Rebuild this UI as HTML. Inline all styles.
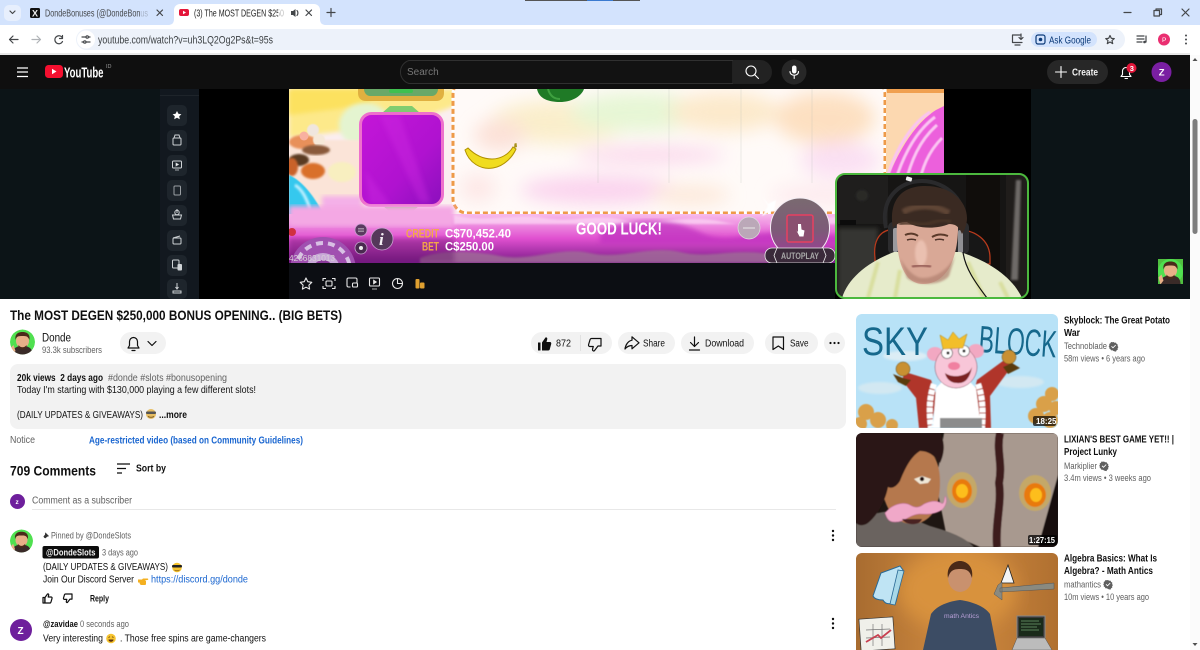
<!DOCTYPE html>
<html><head><meta charset="utf-8"><title>The MOST DEGEN $250,000 BONUS OPENING.. (BIG BETS)</title>
<style>
html,body{margin:0;padding:0;width:1200px;height:650px;overflow:hidden;background:#fff}
svg{display:block;position:absolute;left:0;top:0}
text{font-family:"Liberation Sans",sans-serif;white-space:pre}
.m{fill:#0f0f0f}.g{fill:#606060}.b{font-weight:bold}
.ic{fill:none;stroke:#0f0f0f;stroke-width:1.2;stroke-linejoin:round;stroke-linecap:round}
.ch{fill:none;stroke:#44474a;stroke-width:1.2;stroke-linecap:round;stroke-linejoin:round}
.w{fill:none;stroke:#fff;stroke-width:1.1;stroke-linecap:round;stroke-linejoin:round}
.sb{fill:#1e252c}
.si{fill:none;stroke:#cfd3d6;stroke-width:1}
.bi{fill:none;stroke:#e8e8e8;stroke-width:1.1;stroke-linejoin:round}
</style></head><body>
<svg width="1200" height="650" viewBox="0 0 1200 650" xmlns="http://www.w3.org/2000/svg">
<defs>
<filter id="b1"><feGaussianBlur stdDeviation="1"/></filter>
<filter id="b2"><feGaussianBlur stdDeviation="2.5"/></filter>
<filter id="b8"><feGaussianBlur stdDeviation="9"/></filter>
<filter id="b05"><feGaussianBlur stdDeviation="0.5"/></filter>
<linearGradient id="cl" x1="0" y1="0" x2="0" y2="1"><stop offset="0" stop-color="#f8bcec"/><stop offset=".5" stop-color="#e050d0"/><stop offset="1" stop-color="#7a1a88"/></linearGradient>
<linearGradient id="pur" x1="0" y1="0" x2="1" y2="1"><stop offset="0" stop-color="#c416d8"/><stop offset=".6" stop-color="#b012d0"/><stop offset="1" stop-color="#8a10bc"/></linearGradient>
<linearGradient id="lb" x1="0" y1="0" x2="1" y2="0"><stop offset="0" stop-color="#a86c30"/><stop offset=".5" stop-color="#d08a40"/><stop offset="1" stop-color="#b07030"/></linearGradient>
<linearGradient id="sp" x1="0" y1="0" x2="0" y2="1"><stop offset="0" stop-color="#7a6a70"/><stop offset=".55" stop-color="#7d5a78"/><stop offset="1" stop-color="#a03a98"/></linearGradient>
<clipPath id="gc"><rect x="289" y="89" width="655" height="174"/></clipPath>
<clipPath id="wc"><rect x="836" y="174" width="192" height="124" rx="9"/></clipPath>
<clipPath id="t1"><rect x="856" y="314" width="202" height="114" rx="6"/></clipPath>
<clipPath id="t2"><rect x="856" y="433" width="202" height="114" rx="6"/></clipPath>
<clipPath id="t3"><path d="M856 650V559a6 6 0 0 1 6-6h190a6 6 0 0 1 6 6v91z"/></clipPath>
<clipPath id="a1"><circle cx="22.500" cy="342" r="12.500"/></clipPath>
<clipPath id="a2"><circle cx="21.500" cy="541" r="11.500"/></clipPath>
<clipPath id="a3"><rect x="1158" y="259" width="25" height="25"/></clipPath>
<g id="dude"><circle cx="0" cy="0" r="12.500" fill="#50e050"/><path d="M-10 13c0-7 4-9 10-9s10 2 10 9z" fill="#3a2a28"/><ellipse cx="0" cy="-1" rx="6.500" ry="7" fill="#e8b088"/><path d="M-7-2c-1-7 4-8 7-8s8 1 7 8c-2-4-3-4-7-4s-6 0-7 4z" fill="#4a2a1a"/><path d="M-4 3c2 3 6 3 8 0l0 3c-2 2-6 2-8 0z" fill="#4a2a1a"/><path d="M-12 6l3-3 2 6-3 4z" fill="#e8b088"/></g>
<path id="vf" d="M0-4.500l1.100.8 1.400-.2.6 1.300 1.200.7-.2 1.400.8 1.100-.8 1.100.2 1.400-1.200.7-.6 1.300-1.400-.2L0 4.500l-1.100-.8-1.400.2-.6-1.300-1.200-.7.2-1.400L-4.900 0l.8-1.100-.2-1.400 1.200-.7.6-1.300 1.400.2z" fill="#606060"/>
<path id="chk" d="M-2-.2l1.500 1.500L2.200-1.400" fill="none" stroke="#fff" stroke-width=".9"/>
</defs>

<!-- Browser chrome -->
<rect width="1200" height="25" fill="#d3e3fd"/>
<rect x="525" y="0" width="115" height="1" fill="#555"/>
<rect x="587" y="0" width="26" height="1" fill="#3a7ad0"/>
<rect x="4" y="5" width="17" height="16" rx="5" fill="#e7effd"/>
<path d="M10 11l2.500 2.500L15 11" class="ch"/>
<rect x="30" y="8" width="10" height="10" rx="1.500" fill="#111"/>
<text x="32" y="16.500" font-size="9" fill="#eee" font-weight="bold">X</text>
<text x="45" y="16.500" font-size="9.800" fill="#44474a" textLength="103" lengthAdjust="spacingAndGlyphs">DondeBonuses (@DondeBonus</text>
<rect x="140" y="5" width="10" height="16" fill="#d3e3fd" opacity=".7"/>
<path d="M157 10l5.500 5.500M162.500 10L157 15.500" class="ch"/>
<path d="M168 25c3 0 6-1 6-6V10a6 6 0 0 1 6-6h134a6 6 0 0 1 6 6v9c0 5 3 6 6 6z" fill="#fff"/>
<rect x="179" y="9" width="10" height="7" rx="2" fill="#e4163a"/><path d="M183 10.700v3.600l3-1.800z" fill="#fff"/>
<text x="194" y="16.500" font-size="9.800" fill="#1f1f1f" textLength="90" lengthAdjust="spacingAndGlyphs">(3) The MOST DEGEN $250</text>
<rect x="278" y="6" width="8" height="15" fill="#fff" opacity=".7"/>
<path d="M291 11h2l2.500-2v8l-2.500-2h-2z" fill="#44474a"/><path d="M297 10.500c1.200 1.200 1.200 3.800 0 5" class="ch" stroke-width=".9"/>
<path d="M306 10l5.500 5.500M311.500 10L306 15.500" class="ch"/>
<path d="M331 8.500v8M327 12.500h8" class="ch"/>
<path d="M1124 12.500h7" class="ch"/>
<path d="M1154 10.500h5.500v5.500h-5.500zM1156 10.500V9h5.500v5.500H1159.500" class="ch"/>
<path d="M1182 9l7 7M1189 9l-7 7" class="ch"/>

<rect y="25" width="1200" height="28" fill="#fff"/>
<rect x="76" y="29" width="1049" height="21" rx="10.500" fill="#edf2fa"/>
<path d="M18 39.500H9.500M9.500 39.500l3.500-3.500M9.500 39.500l3.500 3.500" class="ch"/>
<path d="M32 39.500h8.500M40.500 39.500L37 36M40.500 39.500L37 43" class="ch" style="stroke:#b0b3b7"/>
<path d="M62.500 38a4 4 0 1 0 0 3.500M62.500 35.500v3h-3" class="ch"/>
<circle cx="86" cy="39.500" r="9" fill="#fff"/>
<path d="M82 37h4M88.500 37h1.500M82 42h1.500M86 42h4" class="ch"/><circle cx="87.200" cy="37" r="1.200" class="ch"/><circle cx="84.800" cy="42" r="1.200" class="ch"/>
<text x="98" y="43.500" font-size="10.600" fill="#3c4043" textLength="175" lengthAdjust="spacingAndGlyphs">youtube.com/watch?v=uh3LQ2Og2Ps&amp;t=95s</text>
<path d="M1021 35h-8.500v7.500h9.500" class="ch"/><path d="M1015 45h5M1021 34v5M1019 37.500l2 2 2-2" class="ch"/>
<rect x="1031" y="32" width="66" height="15" rx="7.500" fill="#d3e3fd"/>
<rect x="1036" y="35" width="9" height="9" rx="2" fill="none" stroke="#0b3a78" stroke-width="1.200"/><circle cx="1040.500" cy="39.500" r="1.800" fill="#0b3a78"/>
<text x="1049" y="43.500" font-size="10" fill="#0b3a78" textLength="42" lengthAdjust="spacingAndGlyphs">Ask Google</text>
<path d="M1110 35.500l1.300 2.800 3 .3-2.300 2 .7 3-2.700-1.600-2.700 1.600.7-3-2.300-2 3-.3z" class="ch"/>
<path d="M1137 36h7M1137 39h7M1137 42h5" class="ch" stroke-width="1.400"/><path d="M1146 36v6" class="ch"/><circle cx="1144.500" cy="42" r="1.300" fill="#44474a"/>
<circle cx="1164" cy="39.500" r="6" fill="#ea2f71"/><text x="1162" y="42" font-size="6.500" fill="#fff">P</text>
<circle cx="1186" cy="35.500" r="1" fill="#44474a"/><circle cx="1186" cy="39.500" r="1" fill="#44474a"/><circle cx="1186" cy="43.500" r="1" fill="#44474a"/>
<rect y="53" width="1190" height="2" fill="#e8e8e8"/>

<!-- YouTube header -->
<rect y="55" width="1190" height="34" fill="#0f0f0f"/>
<path d="M17 68h11M17 72h11M17 76.500h11" fill="none" stroke="#fff" stroke-width="1.200"/>
<rect x="45" y="65" width="18" height="13" rx="3.500" fill="#f40f2f"/><path d="M52 68.800v5.400l4.500-2.700z" fill="#fff"/>
<text x="64" y="77.500" font-size="15" fill="#fff" font-weight="bold" textLength="39.500" lengthAdjust="spacingAndGlyphs">YouTube</text>
<text x="106" y="68" font-size="5.500" fill="#999">ID</text>
<path d="M733 60.500H409a12 12 0 0 0 0 23h324z" fill="#121212" stroke="#303030"/>
<text x="407" y="75" font-size="10" fill="#777">Search</text>
<path d="M733 60h27a12 12 0 0 1 0 24h-27z" fill="#222"/>
<circle cx="751" cy="71" r="5" class="w"/><path d="M755 75l3.500 3.500" class="w"/>
<circle cx="794" cy="72" r="12.500" fill="#272727"/>
<rect x="792" y="65.500" width="4.500" height="8" rx="2.200" fill="#fff"/><path d="M790 71.500c0 5 8.500 5 8.500 0M794.200 75.500v3" class="w"/>
<rect x="1047" y="60" width="61" height="24" rx="12" fill="#272727"/>
<path d="M1061 66.500v11M1055.500 72h11" class="w" stroke-width="1.200"/>
<text x="1072" y="75.500" font-size="10" fill="#f1f1f1" font-weight="bold" textLength="26" lengthAdjust="spacingAndGlyphs">Create</text>
<path d="M1121 76.500h10l-1.500-2v-3.500a3.500 3.500 0 0 0-7 0v3.500zM1125 78.500h2.500" class="w"/>
<circle cx="1131.500" cy="68" r="5" fill="#e4163a"/><text x="1129.700" y="70.800" font-size="7.500" fill="#fff" font-weight="bold">3</text>
<circle cx="1161.500" cy="72" r="10" fill="#7a1fa2"/><text x="1158.700" y="75.500" font-size="9.500" fill="#fff" font-weight="bold">Z</text>

<!-- Video -->
<rect y="89" width="1190" height="210" fill="#0c1417"/>
<rect x="160" y="89" width="39" height="210" fill="#12181f"/>
<rect x="160" y="95" width="39" height=".7" fill="#232a30"/>
<rect x="199" y="89" width="835" height="210" fill="#000"/>
<rect x="1031" y="89" width="159" height="210" fill="#0c1417"/>
<g>
<rect class="sb" x="167" y="105" width="20" height="21" rx="5"/><path d="M177 111l1.400 2.800 3 .4-2.200 2.100.6 3-2.800-1.500-2.800 1.500.6-3-2.200-2.100 3-.4z" fill="#fff"/>
<rect class="sb" x="167" y="130" width="20" height="21" rx="5"/><rect x="173" y="138" width="8" height="7" rx="1" class="si"/><path d="M174 138l1-3h4l1 3" class="si"/>
<rect class="sb" x="167" y="155" width="20" height="21" rx="5"/><rect x="172.500" y="161" width="9" height="7" rx="1" class="si"/><path d="M176 163v3l2.500-1.500zM175 170h4" fill="#fff" stroke="#cfd3d6" stroke-width=".7"/>
<rect class="sb" x="167" y="180" width="20" height="21" rx="5"/><rect x="174" y="186" width="6.500" height="9" rx="1" class="si" opacity=".7"/>
<rect class="sb" x="167" y="205" width="20" height="21" rx="5"/><path d="M172.500 215h9l-1 4h-7zM177 209v4" class="si"/><circle cx="177" cy="212.500" r="2.200" class="si"/>
<rect class="sb" x="167" y="230" width="20" height="21" rx="5"/><rect x="173" y="238" width="8" height="6" rx="1" class="si"/><path d="M173 238l7-2" class="si"/>
<rect class="sb" x="167" y="255" width="20" height="21" rx="5"/><rect x="172.500" y="260" width="6.500" height="8" rx="1" class="si"/><rect x="177.500" y="264" width="4.500" height="6.500" rx="1" fill="#cfd3d6"/>
<rect class="sb" x="167" y="279" width="20" height="20" rx="5"/><path d="M173 291h8v2h-8zM177 283v6M175.500 287l1.500 2 1.500-2" class="si"/>
</g>

<!-- game -->
<rect x="289" y="263" width="546" height="36" fill="#0c0e13"/>
<g clip-path="url(#gc)">
<rect x="289" y="89" width="655" height="174" fill="#fbeef0"/>
<path d="M289 89h170v15c-40 18-100 25-170 34z" fill="#fde98a" filter="url(#b2)"/>
<path d="M289 89h90l-10 14c-25 6-50 8-80 12z" fill="#fce15f" filter="url(#b2)"/>
<ellipse cx="365" cy="125" rx="26" ry="22" fill="#e4f4d0" filter="url(#b2)"/>
<rect x="289" y="140" width="75" height="70" fill="#fbe4d8" filter="url(#b1)"/>
<ellipse cx="303" cy="142" rx="14" ry="7" fill="#e8905a" filter="url(#b1)"/>
<circle cx="313" cy="130" r="6" fill="#f0e6de" filter="url(#b05)"/><circle cx="319" cy="140" r="6" fill="#f6e8d8" filter="url(#b05)"/>
<circle cx="304" cy="136" r="4.500" fill="#f8b0a0"/>
<ellipse cx="316" cy="150" rx="14" ry="5" fill="#8a5a3a" filter="url(#b1)"/>
<ellipse cx="299" cy="160" rx="10" ry="6" fill="#5a3b20" filter="url(#b1)"/>
<ellipse cx="313" cy="171" rx="12" ry="8" fill="#d9702c" filter="url(#b1)"/>
<ellipse cx="292" cy="167" rx="6" ry="9" fill="#c9622a" filter="url(#b1)"/>
<ellipse cx="342" cy="172" rx="14" ry="10" fill="#f8efc0" filter="url(#b1)"/>
<path d="M289 175c14 6 25 22 33 36-8 4-22 4-33 9z" fill="#35c8ee" filter="url(#b05)"/>
<path d="M295 185c8 5 12 15 15 24" stroke="#c0f0ff" stroke-width="3" fill="none" filter="url(#b1)"/>
<path d="M322 196h40v16h-40z" fill="#f4b0e8" filter="url(#b2)"/>
<!-- reel panel -->
<rect x="453" y="80" width="432" height="133" rx="14" fill="#fffaf8"/>
<g filter="url(#b8)" opacity=".62">
<ellipse cx="560" cy="122" rx="70" ry="22" fill="#f8e7b0"/><ellipse cx="640" cy="112" rx="70" ry="20" fill="#d8f4c0"/>
<ellipse cx="725" cy="112" rx="55" ry="20" fill="#fbe0b0"/><ellipse cx="825" cy="118" rx="50" ry="26" fill="#fcd0a0"/>
<ellipse cx="500" cy="135" rx="26" ry="16" fill="#fad2c4"/><ellipse cx="650" cy="155" rx="75" ry="8" fill="#f8c0e4"/>
<ellipse cx="600" cy="190" rx="80" ry="14" fill="#f8bce8"/><ellipse cx="690" cy="195" rx="40" ry="10" fill="#fbdfc8"/>
<ellipse cx="840" cy="160" rx="40" ry="18" fill="#f8d0f0"/><ellipse cx="820" cy="195" rx="50" ry="10" fill="#fce0e8"/>
<ellipse cx="478" cy="188" rx="18" ry="14" fill="#fcdcdc"/>
</g>
<path d="M598 89v94M669 89v94M741 89v94M812 89v94" stroke="#b0b8b0" stroke-width=".5" opacity=".5"/>
<rect x="453" y="80" width="432" height="133" rx="14" fill="none" stroke="#fff" stroke-width="3"/>
<rect x="453" y="80" width="432" height="133" rx="14" fill="none" stroke="#ee9a48" stroke-width="3" stroke-dasharray="5 3"/>
<!-- right cream -->
<rect x="886" y="89" width="58" height="100" fill="#fcd8b0"/>
<path d="M887 89h57v4h-57z" fill="#f0a050"/>
<path d="M886 182c12-30 28-58 50-72l8-4v83h-58z" fill="#ec60dc"/>
<path d="M888 175c8-26 24-52 42-63M895 182c8-26 20-50 40-65M905 185c6-24 14-44 32-60M918 188c4-20 10-36 24-50" stroke="#fbc4f2" stroke-width="3" fill="none" filter="url(#b05)"/>
<!-- symbols top -->
<path d="M358 89h86v4c0 5-3 8-8 8h-70c-5 0-8-3-8-8z" fill="#e0b040"/><path d="M364 89h74c0 4-3 7-6 7h-62c-3 0-6-3-6-7z" fill="#69a868"/><rect x="389" y="89" width="24" height="4" rx="2" fill="#3fc050"/>
<path d="M382 113l8-7h22l8 7zM382 205l8 7h22l8-7z" fill="#80cc70"/>
<rect x="360.500" y="113.500" width="82" height="92" rx="11" fill="url(#pur)" stroke="#ee70cc" stroke-width="3" />
<path d="M380 116l40 86h10l-30-86zM365 170l25 34h-20z" fill="#d530e6" opacity=".3" filter="url(#b2)"/>
<path d="M537 89c2 10 12 13 23 13s21-5 24-13z" fill="#1f7a26"/><path d="M548 89c2 7 6 10 12 10" stroke="#3fa040" stroke-width="2" fill="none"/>
<path d="M465 150c4 13 16 20 28 18 12-2 20-12 23-19l-3-2c-4 7-12 12-21 12-10 0-18-5-24-11z" fill="#f0dc20" stroke="#b09000" stroke-width="1"/><path d="M514 148l3-1-.5-4-2 .5z" fill="#a8901c"/>
<!-- clouds -->
<rect x="289" y="214" width="655" height="49" fill="url(#cl)"/>
<rect x="289" y="206" width="165" height="20" fill="#f4a8e4" filter="url(#b2)"/>
<path d="M454 215c30 8 60-2 90 3s50-5 80 2 60-7 100 2 100-10 160-6v8H454z" fill="#fcd6f4" opacity=".75" filter="url(#b1)"/>
<path d="M600 232c30-15 70-15 100 0s60-5 90 2 90-10 154 0v10H600z" fill="#c030c0" opacity=".75" filter="url(#b2)"/>
<path d="M420 258c20-8 50-8 80-2s60-10 90-3 60-8 90-1 50-4 90 2v9H420z" fill="#a06a98" opacity=".85" filter="url(#b1)"/>
<rect x="289" y="238" width="165" height="25" fill="#5a1060" opacity=".35" filter="url(#b2)"/>
<circle cx="323" cy="270" r="33" fill="#a050b0"/><circle cx="323" cy="270" r="27" fill="none" stroke="#d8c0e4" stroke-width="4" stroke-dasharray="7 5"/><circle cx="323" cy="270" r="17" fill="#c8a8d8"/><circle cx="323" cy="270" r="10" fill="#8a3a9a"/>
<circle cx="292" cy="232" r="4" fill="#d03040"/>
<circle cx="361" cy="230" r="6" fill="#5a3a60" stroke="#c8a0d0" stroke-width=".8"/><path d="M358 228.500h6M358 230h6M358 231.500h6" stroke="#ddd" stroke-width=".5"/>
<circle cx="361" cy="248" r="6" fill="#4a2a50" stroke="#c8a0d0" stroke-width=".8"/><circle cx="361" cy="248" r="2" fill="#eee"/>
<circle cx="382" cy="239" r="11" fill="#54385a" stroke="#c8a0d0" stroke-width=".8"/>
<text x="379" y="245" font-size="17" fill="#f4f0f4" font-weight="bold" font-style="italic" style="font-family:'Liberation Serif',serif">i</text>
<text x="406" y="237.500" font-size="11.500" fill="#f4a848" font-weight="bold" textLength="33" lengthAdjust="spacingAndGlyphs">CREDIT</text>
<text x="445" y="237.500" font-size="11.500" fill="#fff" font-weight="bold" textLength="66" lengthAdjust="spacingAndGlyphs">C$70,452.40</text>
<text x="422" y="250.500" font-size="11.500" fill="#f4a848" font-weight="bold" textLength="17" lengthAdjust="spacingAndGlyphs">BET</text>
<text x="445" y="250.500" font-size="11.500" fill="#fff" font-weight="bold" textLength="49" lengthAdjust="spacingAndGlyphs">C$250.00</text>
<text x="576" y="234.500" font-size="17.500" fill="#fff" font-weight="bold" textLength="86" lengthAdjust="spacingAndGlyphs">GOOD LUCK!</text>
<text x="289" y="261" font-size="7.800" fill="#d8d0d8" textLength="46" lengthAdjust="spacingAndGlyphs">4266831013</text>
<path d="M762 196l6 8 8-4-2 10-12 6 6-10z" fill="#fff" filter="url(#b05)"/>
<circle cx="749" cy="228" r="11" fill="#bba8b8" stroke="#ddd" stroke-width=".7"/><path d="M743 228h12" stroke="#e8e8e8"/>
<ellipse cx="800" cy="228" rx="29.500" ry="30" fill="url(#sp)" stroke="#f4eef4"/>
<rect x="787" y="215" width="26" height="27" rx="2" fill="#8a5070" stroke="#e84060" stroke-width="1.500"/>
<path d="M798 224l0 8 -1.500-1.500 3 6h4l1-6-3-1-.5-5.500z" fill="#fff"/>
<rect x="765" y="248" width="70" height="15" rx="7" fill="#3a2a3a" stroke="#eee" stroke-width=".8"/>
<path d="M777 248l-3 7.500 3 7.500M823 248l3 7.500-3 7.500" stroke="#eee" fill="none" stroke-width=".8"/>
<text x="781" y="259" font-size="9" fill="#a8a8a8" font-weight="bold" textLength="38" lengthAdjust="spacingAndGlyphs">AUTOPLAY</text>
</g>
<!-- control icons -->
<path d="M306 278l1.800 3.700 4 .6-2.900 2.800.7 4-3.600-1.900-3.600 1.900.7-4-2.900-2.800 4-.6z" class="bi"/>
<path d="M323 281v-2.500h3M332 278.500h3v2.500M335 286v2.500h-3M326 288.500h-3V286" class="bi"/><rect x="326" y="281" width="6" height="5" rx="1" class="bi"/>
<path d="M357 283v-3.500a1.500 1.500 0 0 0-1.500-1.500h-7a1.500 1.500 0 0 0-1.500 1.500v6a1.500 1.500 0 0 0 1.500 1.500h2" class="bi"/><rect x="352.500" y="283" width="5" height="4" rx="1" class="bi"/>
<rect x="369.500" y="278" width="10" height="8" rx="1" class="bi"/><path d="M373.500 280v4l3-2zM372 289h5" fill="#e8e8e8" stroke="#e8e8e8" stroke-width=".7"/>
<circle cx="397.500" cy="283.500" r="5" class="bi"/><path d="M397.500 278.500v5h5" class="bi"/>
<rect x="415.500" y="279" width="4" height="9.500" rx="1" fill="#e0a030"/><rect x="420" y="282.500" width="4.500" height="6" rx="1" fill="#e0a030"/>
<!-- webcam -->
<g clip-path="url(#wc)">
<rect x="836" y="174" width="192" height="124" fill="#161514"/>
<rect x="838" y="176" width="50" height="48" fill="#1f1e1d"/>
<rect x="838" y="228" width="40" height="70" fill="#353433" filter="url(#b2)"/>
<rect x="966" y="174" width="34" height="100" fill="#100d0b"/>
<rect x="1006" y="174" width="22" height="124" fill="#201d1b"/>
<path d="M1016 180l-5 100 7 0 3-100z" fill="#6e6a68" filter="url(#b1)"/>
<rect x="840" y="220" width="16" height="5" fill="#0c0c0c"/><rect x="856" y="190" width="12" height="11" rx="5" fill="#2a2928" filter="url(#b1)"/>
<path d="M875 258c-2-16 4-26 14-28h70c16 0 31 10 31 28v6h-115z" fill="#171717" stroke="#b83a1c" stroke-width="1.300"/>
<path d="M886 228c-6-28 12-47 36-47s46 20 42 46" fill="none" stroke="#2a2a2c" stroke-width="4"/>
<rect x="888" y="222" width="11" height="32" rx="5" fill="#2c2c2e"/><rect x="956" y="222" width="13" height="32" rx="5" fill="#2c2c2e"/>
<rect x="893" y="228" width="5" height="24" rx="2" fill="#9a9a9e"/><rect x="958" y="230" width="5" height="24" rx="2" fill="#909094"/>
<path d="M842 298c6-20 26-36 52-46l66 0c26 8 52 24 62 46z" fill="#e6ebcb"/>
<path d="M878 262l-10 36M968 262l16 36M900 270l-5 28M1000 282l8 16" stroke="#d8de9e" stroke-width="4" fill="none" filter="url(#b1)"/>
<path d="M897 222c-2 36 6 62 26 62 24 0 36-26 35-62-2-14-60-14-61 0z" fill="#d9a896"/>
<path d="M900 258c8 14 16 20 23 20 10 0 24-6 32-22l-6 20c-8 10-32 10-42 2z" fill="#b08070" opacity=".7" filter="url(#b1)"/>
<ellipse cx="921" cy="253" rx="6" ry="13" fill="#eac0b0" filter="url(#b1)"/>
<path d="M905 235c4-2 9-2 13 1M932 237c5-3 11-3 16-1" stroke="#5a3a2a" stroke-width="2" fill="none"/>
<path d="M907 240c3-1 6-1 9 0M935 240c3-1 6-1 9 0" stroke="#50342a" stroke-width="1.600" fill="none"/>
<path d="M912 267c5-2 14-2 19 0" stroke="#a06860" stroke-width="3" fill="none" filter="url(#b05)"/>
<path d="M893 228c-4-22 4-41 30-42 26-1 44 14 44 32 0 6-2 12-5 16-3-8-7-10-13-10-14 6-34 4-42-2-7 0-11 2-14 6z" fill="#3a2a22"/>
<path d="M903 212c14-8 32-7 46 1" stroke="#5e4536" stroke-width="6" fill="none" filter="url(#b1)"/>
<path d="M899 224c10-3 20 2 28 0s16-6 24-2" stroke="#4a3428" stroke-width="3" fill="none" filter="url(#b1)"/>
<path d="M963 252c2 16 12 30 24 46" stroke="#111" stroke-width="1.200" fill="none"/>
<rect x="906" y="177" width="6" height="4" rx="1" fill="#f0f0f0" transform="rotate(15 909 179)"/>
</g>
<rect x="836" y="174" width="192" height="124" rx="9" fill="none" stroke="#4cb83e" stroke-width="2"/>
<g clip-path="url(#a3)"><rect x="1158" y="259" width="25" height="25" fill="#50c040"/><use href="#dude" transform="translate(1170.500 271.500)"/></g>

<!-- scrollbar -->
<rect x="1190" y="55" width="10" height="595" fill="#fbfbfb"/>
<path d="M1192.500 61l2.500-3 2.500 3z" fill="#505050"/><path d="M1192.500 643l2.500 3 2.500-3z" fill="#505050"/>
<rect x="1192.500" y="119" width="5" height="115" rx="2.500" fill="#7e7e7e"/>

<!-- title & channel -->
<text x="10" y="320" font-size="14" class="m b" textLength="332" lengthAdjust="spacingAndGlyphs">The MOST DEGEN $250,000 BONUS OPENING.. (BIG BETS)</text>
<g clip-path="url(#a1)"><use href="#dude" transform="translate(22.500 342)"/></g>
<text x="42" y="341.500" font-size="11.500" class="m" textLength="29" lengthAdjust="spacingAndGlyphs">Donde</text>
<text x="42" y="353" font-size="9" class="g" textLength="60" lengthAdjust="spacingAndGlyphs">93.3k subscribers</text>
<rect x="120" y="332" width="46" height="22" rx="11" fill="#f2f2f2"/>
<path d="M128 348h11l-1.500-2.500v-4a4 4 0 0 0-8 0v4zM132 350.500h3" class="ic"/>
<path d="M148 341.500l4 4 4-4" class="ic"/>

<!-- actions -->
<rect x="531" y="332" width="81" height="22" rx="11" fill="#f2f2f2"/>
<path d="M538 342.500h2.500v8H538zM542 350.500v-8l3.500-5c1-.5 2 .2 1.800 1.500l-.8 3h3.500c1 0 1.500 1 1.200 2l-1.500 5.500c-.2.600-.8 1-1.400 1z" fill="#0f0f0f"/>
<text x="556" y="346.500" font-size="10" fill="#0f0f0f" textLength="15" lengthAdjust="spacingAndGlyphs">872</text>
<rect x="580" y="335" width=".8" height="16" fill="#ddd"/>
<path d="M601 338.500h-9.500c-.6 0-1.100.3-1.400 1l-1.500 5c-.3 1 .2 2 1.200 2h3.500l-.8 2.700c-.2 1.200.9 2.200 1.900 1.500l3.600-4.700h3v-7.500z" class="ic"/>
<rect x="618" y="332" width="57" height="22" rx="11" fill="#f2f2f2"/>
<path d="M632 336.800l7 6-7 6v-3.300c-3 0-5 1-7 3.500.5-4 3-8 7-8.800z" class="ic"/>
<text x="643" y="346.500" font-size="10" fill="#0f0f0f" textLength="22" lengthAdjust="spacingAndGlyphs">Share</text>
<rect x="681" y="332" width="73" height="22" rx="11" fill="#f2f2f2"/>
<path d="M694.500 337v9.500M690.500 342.500l4 4 4-4M689.500 350h10" class="ic"/>
<text x="705" y="346.500" font-size="10" fill="#0f0f0f" textLength="39" lengthAdjust="spacingAndGlyphs">Download</text>
<rect x="765" y="332" width="53" height="22" rx="11" fill="#f2f2f2"/>
<path d="M773 337h10.500v12.500l-5.200-3.500-5.300 3.500z" class="ic"/>
<text x="790" y="346.500" font-size="10" fill="#0f0f0f" textLength="18.500" lengthAdjust="spacingAndGlyphs">Save</text>
<circle cx="834.500" cy="343" r="10.500" fill="#f2f2f2"/>
<circle cx="830.500" cy="343" r="1.100" fill="#0f0f0f"/><circle cx="834.500" cy="343" r="1.100" fill="#0f0f0f"/><circle cx="838.500" cy="343" r="1.100" fill="#0f0f0f"/>

<!-- description -->
<rect x="10" y="364" width="836" height="65" rx="8" fill="#f2f2f2"/>
<text x="17" y="381" font-size="10" fill="#0f0f0f" font-weight="bold" textLength="86" lengthAdjust="spacingAndGlyphs">20k views  2 days ago</text>
<text x="108" y="381" font-size="10" fill="#606060" textLength="119" lengthAdjust="spacingAndGlyphs">#donde #slots #bonusopening</text>
<text x="17" y="393" font-size="10" fill="#131313" textLength="239" lengthAdjust="spacingAndGlyphs">Today I'm starting with $130,000 playing a few different slots!</text>
<text x="17" y="418" font-size="10" fill="#131313" textLength="126" lengthAdjust="spacingAndGlyphs">(DAILY UPDATES &amp; GIVEAWAYS)</text>
<circle cx="151" cy="414" r="5" fill="#e6bd62"/><rect x="146" y="411.500" width="10" height="2.500" rx="1" fill="#555"/><path d="M148 416.500c1.500 1 4.500 1 6 0" stroke="#6a4a18" stroke-width=".8" fill="none"/>
<text x="159" y="418" font-size="10" fill="#0f0f0f" font-weight="bold" textLength="28" lengthAdjust="spacingAndGlyphs">...more</text>
<text x="10" y="443" font-size="10" fill="#606060" textLength="25" lengthAdjust="spacingAndGlyphs">Notice</text>
<text x="89" y="443.500" font-size="10" fill="#1a66d0" font-weight="bold" textLength="214" lengthAdjust="spacingAndGlyphs">Age-restricted video (based on Community Guidelines)</text>

<!-- comments -->
<text x="10" y="475.500" font-size="13.500" class="m b" textLength="86" lengthAdjust="spacingAndGlyphs">709 Comments</text>
<path d="M117 464h13M117 468.500h9M117 473h5" fill="none" stroke="#0f0f0f" stroke-width="1.200"/>
<text x="136" y="471.500" font-size="10" fill="#0f0f0f" font-weight="bold" textLength="30" lengthAdjust="spacingAndGlyphs">Sort by</text>
<circle cx="17.500" cy="501.500" r="7.500" fill="#6e1f9c"/><text x="15.500" y="504" font-size="6.500" fill="#fff" font-weight="bold">z</text>
<text x="32" y="503.500" font-size="10" fill="#606060" textLength="100" lengthAdjust="spacingAndGlyphs">Comment as a subscriber</text>
<rect x="32" y="509" width="804" height=".8" fill="#e2e2e2"/>

<g clip-path="url(#a2)"><use href="#dude" transform="translate(21.500 541) scale(.92)"/></g>
<path d="M44 538l2-2.500M45.500 533l3 3-1.500.5-1.700 1.500-1.500-1.500 1.500-1.700z" fill="#333" stroke="#333" stroke-width=".6"/>
<text x="51" y="538.500" font-size="9" fill="#606060" textLength="80" lengthAdjust="spacingAndGlyphs">Pinned by @DondeSlots</text>
<circle cx="833" cy="531" r="1.200" fill="#0f0f0f"/><circle cx="833" cy="535.500" r="1.200" fill="#0f0f0f"/><circle cx="833" cy="540" r="1.200" fill="#0f0f0f"/>
<rect x="42.500" y="546" width="56.500" height="12.500" rx="2" fill="#0c0c0c"/>
<text x="46" y="555.500" font-size="9.500" fill="#f1f1f1" font-weight="bold" textLength="49.500" lengthAdjust="spacingAndGlyphs">@DondeSlots</text>
<text x="102" y="555.500" font-size="9" fill="#606060" textLength="36" lengthAdjust="spacingAndGlyphs">3 days ago</text>
<text x="43" y="570" font-size="10" fill="#0f0f0f" textLength="125" lengthAdjust="spacingAndGlyphs">(DAILY UPDATES &amp; GIVEAWAYS)</text>
<circle cx="177" cy="567.500" r="4.800" fill="#f6c430"/><rect x="172" y="565" width="10" height="2.500" rx="1" fill="#222"/><path d="M174.500 570c1.500 1 3.500 1 5 0" stroke="#7a5010" stroke-width=".7" fill="none"/>
<text x="43" y="582.500" font-size="10" fill="#0f0f0f" textLength="91" lengthAdjust="spacingAndGlyphs">Join Our Discord Server</text>
<path d="M138 579.500h4l1-1h4.500c1 0 1 1.500 0 1.500l-2.500.2 1 .8v3c0 .5-.5 1-1 1h-3.500c-1 0-2-1-2-2.500h-1.500z" fill="#f4b020"/>
<text x="151" y="582.500" font-size="10" fill="#1a66d0" textLength="97" lengthAdjust="spacingAndGlyphs">https://discord.gg/donde</text>
<path d="M43 597.500h1.800v5.500H43zM45 603v-5.500l2.500-3.500c.7-.4 1.400.2 1.200 1l-.5 2h3c.7 0 1 .7.8 1.400l-1 3.600c-.2.500-.5 1-1 1z" class="ic" stroke-width=".9"/>
<path d="M72 594h-6.500c-.5 0-.8.3-1 .7L63.500 598c-.2.700.2 1.400.8 1.400h2.500l-.5 2c-.2.800.6 1.400 1.200 1l2.500-3.300h2z" class="ic" stroke-width=".9"/>
<text x="90" y="601.500" font-size="9" fill="#0f0f0f" font-weight="bold" textLength="19" lengthAdjust="spacingAndGlyphs">Reply</text>

<circle cx="21" cy="630" r="11" fill="#6e1f9c"/><text x="17.500" y="634" font-size="10" fill="#fff" font-weight="bold">Z</text>
<text x="43" y="627" font-size="9" fill="#0f0f0f" font-weight="bold" textLength="35" lengthAdjust="spacingAndGlyphs">@zavidae</text>
<text x="80" y="627" font-size="9" fill="#606060" textLength="49" lengthAdjust="spacingAndGlyphs">0 seconds ago</text>
<text x="43" y="641.500" font-size="10" fill="#0f0f0f" textLength="60" lengthAdjust="spacingAndGlyphs">Very interesting</text>
<circle cx="111" cy="638.500" r="4.800" fill="#f6c430"/><path d="M108.500 637.500l1.500-.8M113.500 637.500l-1.500-.8" stroke="#5a3a10" stroke-width=".8"/><path d="M108.500 639.500h5c0 3-5 3-5 0z" fill="#5a3010"/>
<text x="120" y="641.500" font-size="10" fill="#0f0f0f" textLength="146" lengthAdjust="spacingAndGlyphs">. Those free spins are game-changers</text>
<circle cx="833" cy="619" r="1.200" fill="#0f0f0f"/><circle cx="833" cy="623.500" r="1.200" fill="#0f0f0f"/><circle cx="833" cy="628" r="1.200" fill="#0f0f0f"/>

<!-- Thumb 1 -->
<g clip-path="url(#t1)">
<rect x="856" y="314" width="202" height="114" fill="#b8e2f7"/>
<ellipse cx="905" cy="356" rx="22" ry="5" fill="#dcedf5" filter="url(#b1)"/><ellipse cx="880" cy="388" rx="22" ry="6" fill="#d2e8f2" filter="url(#b1)"/><ellipse cx="1020" cy="382" rx="24" ry="6" fill="#d2e8f2" filter="url(#b1)"/>
<text x="862" y="355" font-size="40" fill="#16688c" textLength="66" lengthAdjust="spacingAndGlyphs">SKY</text>
<text x="978" y="352" font-size="38" fill="#16688c" textLength="78" lengthAdjust="spacingAndGlyphs" transform="rotate(4 978 352)">BLOCK</text>
<g filter="url(#b05)">
<path d="M905 372l26 8 6 16-6 32h-12l-3-30-14-18zM1007 358l-30 22-4 16 6 32h12l-1-32 22-30z" fill="#b0352c"/>
<path d="M933 428l3-40 6-6h28l6 6 5 40z" fill="#fff"/>
<path d="M934 384c-5 14-5 28-3 44M978 384c5 14 5 28 4 44" stroke="#fff" stroke-width="6" fill="none" stroke-dasharray="5 1"/>
<rect x="940" y="418" width="42" height="10" fill="#8c8c8c"/>
<ellipse cx="935" cy="354" rx="8" ry="7" fill="#f2a8c2"/><ellipse cx="976" cy="351" rx="8" ry="7" fill="#f2a8c2"/>
<ellipse cx="956" cy="367" rx="21" ry="21" fill="#f8c6d8" stroke="#7a3a50" stroke-width=".5"/>
<circle cx="947" cy="353" r="5.500" fill="#fff" stroke="#333" stroke-width=".6"/><circle cx="964" cy="351" r="5.500" fill="#fff" stroke="#333" stroke-width=".6"/>
<circle cx="948" cy="353" r="1.500" fill="#222"/><circle cx="964" cy="351" r="1.500" fill="#222"/>
<ellipse cx="954" cy="366" rx="6" ry="4" fill="#f080a0"/>
<path d="M945 373c8 6 24 3 27-6-2 10-6 17-15 16-7 0-11-5-12-10z" fill="#7a2020"/>
<path d="M943 349l-3-14 8 5 5-8 6 7 8-5-4 14z" fill="#f2be2a" stroke="#b08010" stroke-width=".5"/>
<circle cx="903" cy="369" r="7" fill="#c89030" stroke="#5a3a10" stroke-width=".5"/><circle cx="1009" cy="357" r="7" fill="#c89030" stroke="#5a3a10" stroke-width=".5"/>
<path d="M893 374l10 4 8 2-5 6-8-4zM1003 367l9-4 8 5-12 6z" fill="#5a3a10"/>
<g fill="#d9a04a"><circle cx="866" cy="412" r="8"/><circle cx="878" cy="420" r="8"/><circle cx="860" cy="424" r="7"/><circle cx="892" cy="425" r="6"/><circle cx="1052" cy="394" r="7"/><circle cx="1044" cy="404" r="8"/><circle cx="1056" cy="408" r="7"/><circle cx="1036" cy="416" r="8"/><circle cx="1050" cy="420" r="8"/></g>
</g>
<rect x="1033" y="416" width="23" height="10" rx="2" fill="#000" opacity=".7"/>
<text x="1036" y="424" font-size="8" fill="#fff" font-weight="bold">18:25</text>
</g>
<!-- Thumb 2 -->
<g clip-path="url(#t2)">
<rect x="856" y="433" width="202" height="114" fill="#1e1612"/>
<g filter="url(#b05)">
<path d="M944 433h114v60l-18 54h-60c-14-6-22-10-34-14l-10-50z" fill="#a8998f"/>
<path d="M1058 475l-20 72h20z" fill="#141010"/>
<path d="M1000 433c-4 18 3 30-1 50 3 20-4 40-2 64" stroke="#3e1a1c" stroke-width="8" fill="none"/>
<ellipse cx="962" cy="490" rx="15" ry="18" fill="#c4a868"/><ellipse cx="962" cy="491" rx="10" ry="12" fill="#e87a10"/><ellipse cx="962" cy="491" rx="6" ry="7" fill="#fdbe1a"/>
<ellipse cx="1035" cy="493" rx="16" ry="18" fill="#c4a868"/><ellipse cx="1035" cy="495" rx="11" ry="12" fill="#e87a10"/><ellipse cx="1036" cy="495" rx="6" ry="7" fill="#fdbe1a"/>
<path d="M856 522c14-8 28-12 40-10l34 14c14 4 34 10 44 21H856z" fill="#6a635e"/>
<path d="M882 470c4-14 22-24 40-22 12 2 18 16 18 34 0 18-4 34-18 40-14 6-28-2-34-14-6-12-8-26-6-38z" fill="#b5784e"/>
<path d="M856 433h84c6 10 4 22 0 30-6-8-12-12-20-12-10 6-16 20-20 30-4 6-8 8-12 6-2 12-10 28-20 36-6 4-10 2-12 0z" fill="#2a1812"/>
<path d="M914 479l8-3 9 3-3 4-8 1z" fill="#f0e8d8"/><circle cx="922" cy="479" r="2.200" fill="#201010"/>
<path d="M885 513c6-8 18-12 25-8 5 3 9 3 14-1 8-4 14-3 17-1s3-2 4-7c3 3 1 12-5 15-8 4-14 3-21 3-10 1-14 8-24 8-7 0-8-4-10-9z" fill="#f0a8c8" stroke="#c06a98" stroke-width=".5"/>
<path d="M902 519h20c-2 7-16 7-20 0z" fill="#4a2020"/>
</g>
<rect x="1028" y="535" width="29" height="10" rx="2" fill="#000" opacity=".75"/>
<text x="1029" y="543" font-size="8" fill="#fff" font-weight="bold" textLength="26" lengthAdjust="spacingAndGlyphs">1:27:15</text>
</g>
<!-- Thumb 3 -->
<g clip-path="url(#t3)">
<rect x="856" y="553" width="202" height="97" fill="url(#lb)"/>
<ellipse cx="957" cy="590" rx="60" ry="40" fill="#d8923e" filter="url(#b8)"/>
<path d="M881 573l19-7 3 4-7 32c-7 3-11 2-13-2-6 0-9-2-10-4z" fill="#bfe4f4" stroke="#2a6a96" stroke-width="1"/>
<path d="M898 570l6 1-9 34-5-1z" fill="#a8d8e8" stroke="#2a6a96" stroke-width=".8"/>
<path d="M1008 565l6 18h-13z" fill="#f4f4f4" stroke="#222" stroke-width=".8"/>
<path d="M998 585l4-3 0 18-8-6zM1000 588l54-5v6l-54 3z" fill="#8a8a80" stroke="#555" stroke-width=".5"/>
<ellipse cx="960" cy="578" rx="12" ry="14" fill="#c9916e"/>
<path d="M948 578c-2-12 6-17 12-17s14 5 12 17c-2-7-5-9-12-9s-10 2-12 9z" fill="#4a2a18"/>
<path d="M923 650l8-36c5-7 14-12 29-14 14 2 25 7 30 14l7 36z" fill="#3c4c64"/>
<text x="944" y="618" font-size="6.500" fill="#b8a0d8" textLength="35" lengthAdjust="spacingAndGlyphs">math Antics</text>
<rect x="860" y="618" width="34" height="32" fill="#f0f0ea" stroke="#333" stroke-width=".7" transform="rotate(-4 877 634)"/>
<path d="M866 630l24-1M866 638l24-1M873 624v22M882 624v22" stroke="#777" stroke-width=".7"/>
<path d="M866 642l12-7 3 3 10-8" stroke="#c84050" stroke-width="1.800" fill="none"/>
<rect x="1017" y="616" width="28" height="22" fill="#3a3a3a" stroke="#888" stroke-width="1"/><rect x="1019" y="618" width="24" height="18" fill="#1a2a1a"/>
<path d="M1021 621h18M1021 624h20M1021 627h16M1021 630h18" stroke="#70a070" stroke-width=".7"/>
<path d="M1012 650l5-12h28l7 12z" fill="#bcbcbc" stroke="#555" stroke-width=".5"/>
</g>

<!-- side text -->
<text x="1064" y="323.500" font-size="10" fill="#0f0f0f" font-weight="bold" textLength="106" lengthAdjust="spacingAndGlyphs">Skyblock: The Great Potato</text>
<text x="1064" y="336" font-size="10" fill="#0f0f0f" font-weight="bold" textLength="16" lengthAdjust="spacingAndGlyphs">War</text>
<text x="1064" y="349" font-size="9" fill="#606060" textLength="43" lengthAdjust="spacingAndGlyphs">Technoblade</text>
<use href="#vf" transform="translate(1113.500 346.500)"/><use href="#chk" transform="translate(1113.500 346.500)"/>
<text x="1064" y="361.500" font-size="9" fill="#606060" textLength="81" lengthAdjust="spacingAndGlyphs">58m views • 6 years ago</text>

<text x="1064" y="442.500" font-size="10" fill="#0f0f0f" font-weight="bold" textLength="110" lengthAdjust="spacingAndGlyphs">LIXIAN'S BEST GAME YET!! |</text>
<text x="1064" y="455" font-size="10" fill="#0f0f0f" font-weight="bold" textLength="53" lengthAdjust="spacingAndGlyphs">Project Lunky</text>
<text x="1064" y="469" font-size="9" fill="#606060" textLength="33" lengthAdjust="spacingAndGlyphs">Markiplier</text>
<use href="#vf" transform="translate(1104 466)"/><use href="#chk" transform="translate(1104 466)"/>
<text x="1064" y="481" font-size="9" fill="#606060" textLength="87" lengthAdjust="spacingAndGlyphs">3.4m views • 3 weeks ago</text>

<text x="1064" y="561.500" font-size="10" fill="#0f0f0f" font-weight="bold" textLength="93" lengthAdjust="spacingAndGlyphs">Algebra Basics: What Is</text>
<text x="1064" y="574" font-size="10" fill="#0f0f0f" font-weight="bold" textLength="89" lengthAdjust="spacingAndGlyphs">Algebra? - Math Antics</text>
<text x="1064" y="587.500" font-size="9" fill="#606060" textLength="37" lengthAdjust="spacingAndGlyphs">mathantics</text>
<use href="#vf" transform="translate(1108 584.500)"/><use href="#chk" transform="translate(1108 584.500)"/>
<text x="1064" y="600" font-size="9" fill="#606060" textLength="85" lengthAdjust="spacingAndGlyphs">10m views • 10 years ago</text>
</svg>
</body></html>
